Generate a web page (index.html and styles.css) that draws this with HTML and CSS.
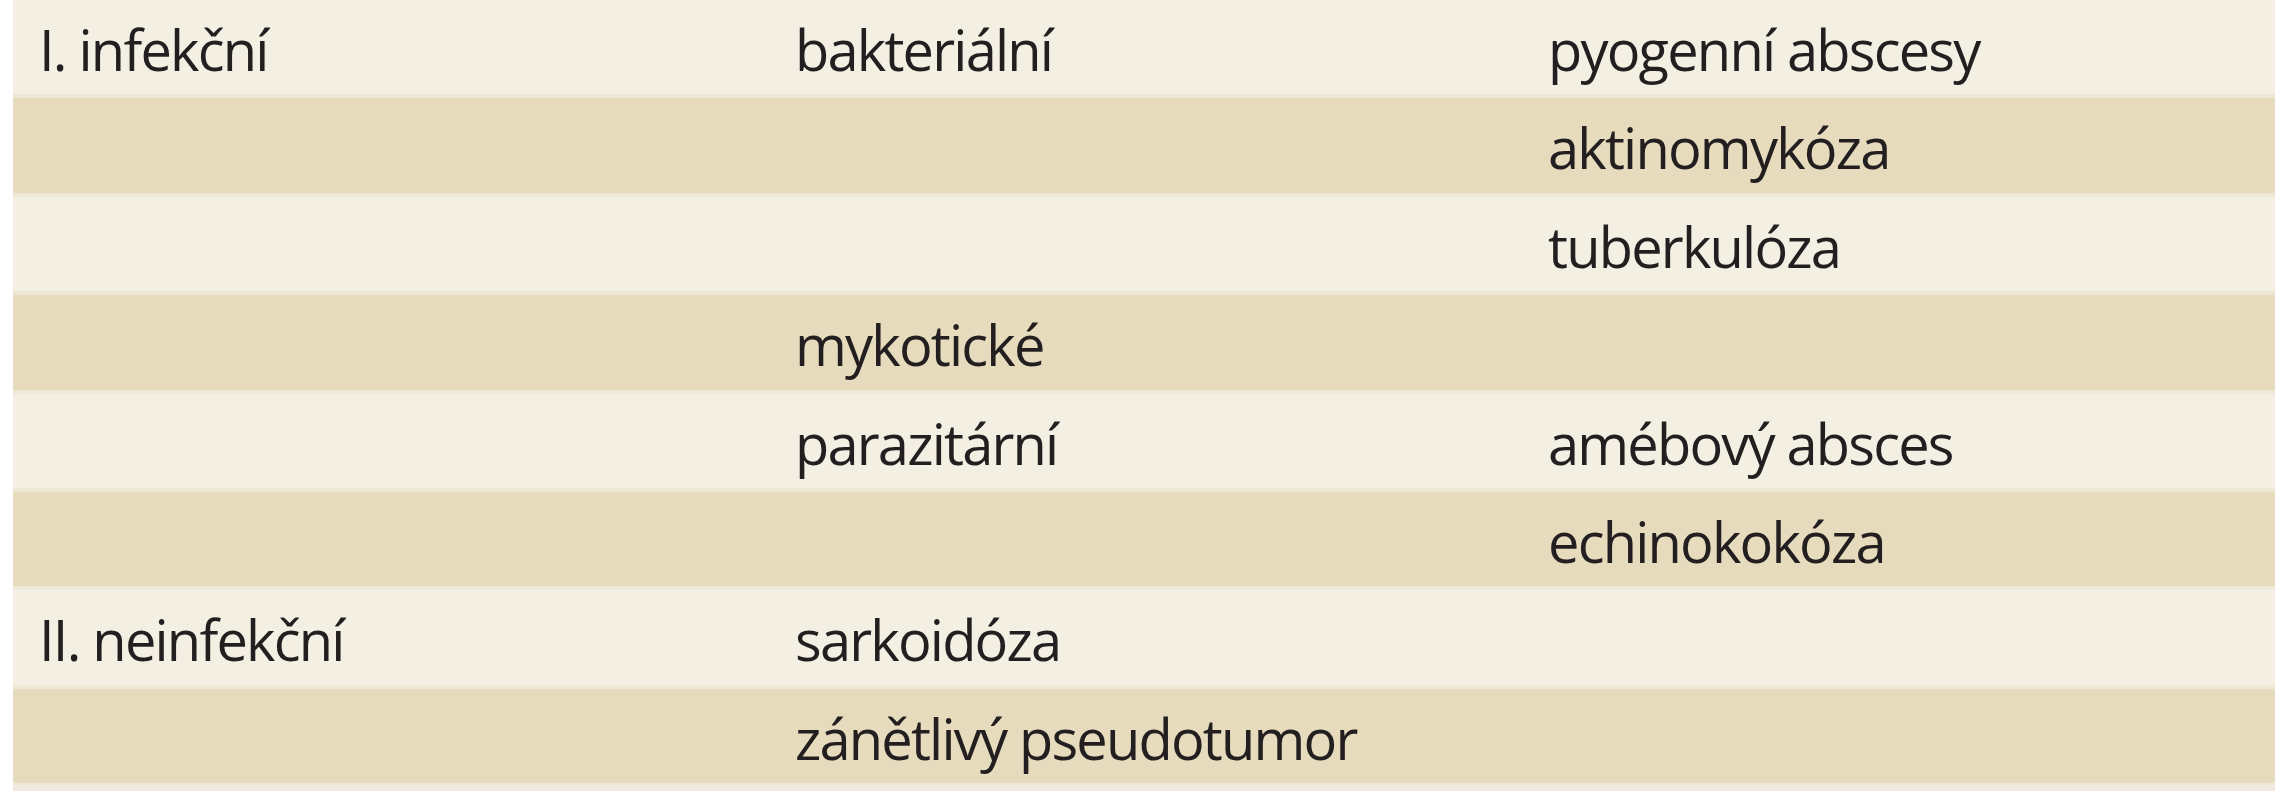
FILE: index.html
```html
<!DOCTYPE html>
<html lang="cs">
<head>
<meta charset="utf-8">
<title>Tabulka</title>
<link rel="stylesheet" href="styles.css">
</head>
<body>
<div class="table">
  <div class="row light"><div class="cell">I. infekční</div><div class="cell">bakteriální</div><div class="cell">pyogenní abscesy</div></div>
  <div class="row dark"><div class="cell"></div><div class="cell"></div><div class="cell">aktinomykóza</div></div>
  <div class="row light"><div class="cell"></div><div class="cell"></div><div class="cell">tuberkulóza</div></div>
  <div class="row dark"><div class="cell"></div><div class="cell">mykotické</div><div class="cell"></div></div>
  <div class="row light"><div class="cell"></div><div class="cell">parazitární</div><div class="cell">amébový absces</div></div>
  <div class="row dark"><div class="cell"></div><div class="cell"></div><div class="cell">echinokokóza</div></div>
  <div class="row light"><div class="cell">II. neinfekční</div><div class="cell">sarkoidóza</div><div class="cell"></div></div>
  <div class="row dark"><div class="cell"></div><div class="cell">zánětlivý pseudotumor</div><div class="cell"></div></div>
</div>
</body>
</html>
```

FILE: styles.css
```css
html, body {
  margin: 0;
  padding: 0;
  background: #ffffff;
}

.table {
  margin-left: 13px;
  display: flex;
  flex-direction: column;
  font-family: "Open Sans", "DejaVu Sans", sans-serif;
  font-size: 56px;
  line-height: 76px;
  letter-spacing: -1.8px;
  color: #231f20;
  border-bottom: 4px solid #f1ece0;
}

.row {
  display: grid;
  grid-template-columns: 756px 753px 1fr;
  height: 98.4px;
  box-sizing: border-box;
  border-bottom: 4px solid transparent;
}

.row.light {
  background: #f3efe3;
  border-bottom-color: #ede7d6;
}

.row.dark {
  background: #e6dcbd;
  border-bottom-color: #efe9da;
}

.cell {
  padding: 11px 0 0 26px;
  white-space: nowrap;
}
```
